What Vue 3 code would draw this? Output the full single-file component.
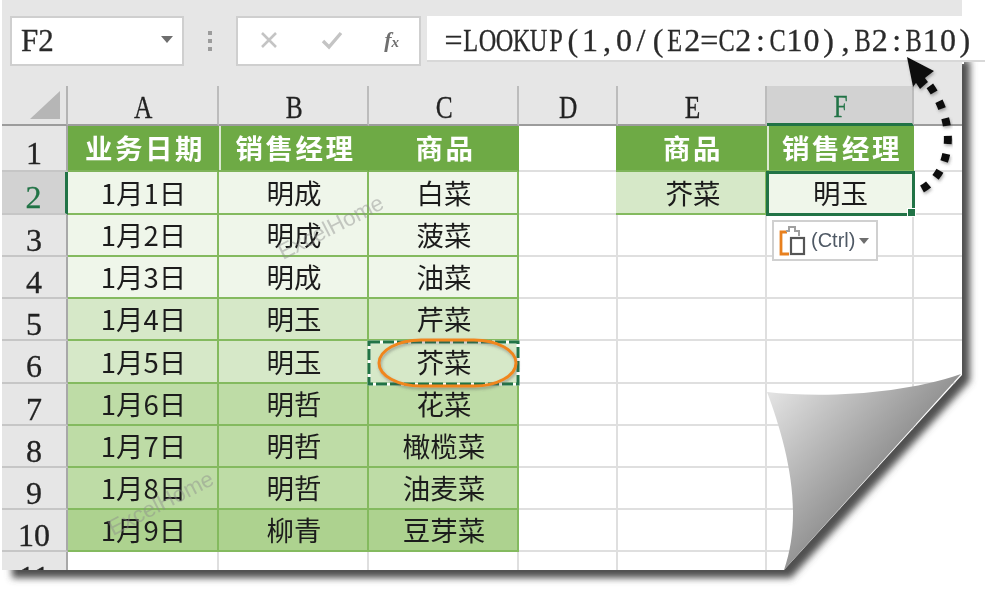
<script setup>
const colWidths = [66, 151, 150, 150, 99, 149, 147, 50]
const rowHeights = [46, 43, 42, 42, 42, 43, 42, 42, 42, 42, 42]
const columns = ['A', 'B', 'C', 'D', 'E', 'F', '']
const formula = '=LOOKUP(1,0/(E2=C2:C10),B2:B10)'.split('').map((ch) => ({ ch, wide: /[A-Z]/.test(ch) }))

const table = [
  ['业务日期', '销售经理', '商品'],
  ['1月1日', '明成', '白菜'],
  ['1月2日', '明成', '菠菜'],
  ['1月3日', '明成', '油菜'],
  ['1月4日', '明玉', '芹菜'],
  ['1月5日', '明玉', '芥菜'],
  ['1月6日', '明哲', '花菜'],
  ['1月7日', '明哲', '橄榄菜'],
  ['1月8日', '明哲', '油麦菜'],
  ['1月9日', '柳青', '豆芽菜'],
  ['', '', '']
]
const bands = ['head', 'b1', 'b1', 'b1', 'b2', 'b2', 'b3', 'b3', 'b3', 'b4', '']
const lookup = { 0: [['商品', 'head ext'], ['销售经理', 'head sepl']], 1: [['芥菜', 'b2 ext'], ['明玉', 'b1 selected']] }

const rows = table.map((cells, i) => {
  const list = cells.map((text, c) => ({ text, cls: bands[i] + (i === 0 && c === 1 ? ' sepl' : '') }))
  list.push({ text: '', cls: '' })
  const extra = lookup[i] || [['', ''], ['', '']]
  extra.forEach(([text, cls]) => list.push({ text, cls }))
  list.push({ text: '', cls: '' })
  return { num: i + 1, cells: list }
})

const gridStyle = {
  gridTemplateColumns: colWidths.map((w) => w + 'px').join(' '),
  gridTemplateRows: '40px ' + rowHeights.map((h) => h + 'px').join(' ')
}
</script>

<template>
  <div class="page">
    <svg class="back" width="985" height="594" viewBox="0 0 985 594">
      <defs>
        <filter id="soft" x="-5%" y="-5%" width="110%" height="110%"><feGaussianBlur stdDeviation="3.6" /></filter>
      </defs>
      <path d="M12 60 L970 60 L970 381 L791 578 L12 578 Z" fill="#4f4f4f" filter="url(#soft)" />
    </svg>

    <div class="sheet">
      <div class="toolbar">
        <div class="namebox">
          <span>F2</span>
          <i class="caret"></i>
        </div>
        <div class="dots"><i></i><i></i><i></i></div>
        <div class="fnbox">
          <svg width="22" height="22" viewBox="0 0 22 22"><path d="M4 4 L18 18 M18 4 L4 18" stroke="#c4c4c4" stroke-width="2.6" fill="none" /></svg>
          <svg width="24" height="22" viewBox="0 0 24 22"><path d="M3 12 L9 18 L21 4" stroke="#c4c4c4" stroke-width="3.4" fill="none" /></svg>
          <span class="fx">f<small>x</small></span>
        </div>
        <div class="formula"><span v-for="(c, i) in formula" :key="i" class="ch"><span :class="{ wide: c.wide }">{{ c.ch }}</span></span></div>
      </div>

      <div class="grid" :style="gridStyle">
        <div class="corner">
          <svg width="34" height="32" viewBox="0 0 34 32"><path d="M1 30 L31 2 L31 30 Z" fill="#b6b6b6" /></svg>
        </div>
        <div v-for="c in columns" :key="c" class="colhead" :class="{ on: c === 'F', last: !c }"><span>{{ c }}</span></div>

        <template v-for="row in rows" :key="row.num">
          <div class="rowhead" :class="{ on: row.num === 2 }">{{ row.num }}</div>
          <div v-for="(cell, i) in row.cells" :key="i" class="cell" :class="cell.cls">
            {{ cell.text }}
            <template v-if="cell.cls.includes('selected')">
              <i class="handle"></i>
              <div class="paste">
                <svg width="32" height="32" viewBox="0 0 32 32">
                  <path d="M9 7 H3 V29 H11" stroke="#e8801e" stroke-width="2.8" fill="none" />
                  <path d="M8 6 H11 V2 H17 V6 H21 V11" stroke="#a0a0a0" stroke-width="2" fill="none" />
                  <rect x="13" y="13" width="13" height="16" stroke="#555" stroke-width="2.2" fill="#fff" />
                </svg>
                <span>(Ctrl)</span>
                <i class="caret small"></i>
              </div>
            </template>
          </div>
        </template>
      </div>
    </div>

    <svg class="over" width="985" height="594" viewBox="0 0 985 594">
      <defs>
        <linearGradient id="curl" gradientUnits="userSpaceOnUse" x1="770" y1="395" x2="905" y2="515">
          <stop offset="0" stop-color="#e2e2e2" />
          <stop offset="1" stop-color="#757575" />
        </linearGradient>
        <filter id="glow" x="-10%" y="-10%" width="120%" height="130%"><feDropShadow dx="1" dy="2" stdDeviation="1.5" flood-color="#555" flood-opacity=".45" /></filter>
      </defs>

      <rect x="369" y="342" width="149" height="42" fill="none" stroke="#fff" stroke-width="3" />
      <rect x="369" y="342" width="149" height="42" fill="none" stroke="#217346" stroke-width="3" stroke-dasharray="11 3" />
      <rect x="379" y="340" width="137" height="46" rx="42" ry="23" fill="none" stroke="#f0861f" stroke-width="3" filter="url(#glow)" />

      <text class="mark" transform="translate(283 260) rotate(-27)">ExcelHome</text>
      <text class="mark" transform="translate(113 536) rotate(-27)">ExcelHome</text>

      <path d="M767 392 C820 398 900 395 961 374 L784 570 C805 510 785 440 767 392 Z" fill="url(#curl)" />

      <g filter="url(#glow)">
        <path d="M922 189 C948 175 962 128 927 82" fill="none" stroke="#111" stroke-width="8" stroke-dasharray="8 10" />
        <path d="M907 57 L934 71 L925 78 L928 82 L920 89 L916 83 L913 87 Z" fill="#111" />
      </g>
    </svg>
  </div>
</template>

<style scoped>
.page {
  position: relative;
  width: 985px;
  height: 594px;
  overflow: hidden;
  background: #fff;
  filter: blur(0.35px);
}
.back,
.over {
  position: absolute;
  left: 0;
  top: 0;
  pointer-events: none;
}
.over {
  z-index: 3;
}
.mark {
  font: 22.5px "Liberation Sans", sans-serif;
  fill: #8c8c8c;
  fill-opacity: 0.45;
}
.sheet {
  position: relative;
  z-index: 1;
  width: 962px;
  height: 570px;
  margin-left: 2px;
  background: #fff;
  clip-path: polygon(-2px 0, 983px 0, 983px 64px, 960px 64px, 960px 375px, 782px 570px, -2px 570px);
}
.toolbar {
  display: flex;
  align-items: flex-start;
  box-sizing: border-box;
  width: 960px;
  height: 86px;
  padding: 16px 0 0 8px;
  background: #e6e6e6;
}
.namebox {
  flex: none;
  display: flex;
  align-items: center;
  justify-content: space-between;
  box-sizing: border-box;
  width: 174px;
  height: 50px;
  padding: 0 9px 0 9px;
  background: #fff;
  border: 2px solid #cfcfcf;
  font: 31px "Liberation Serif", serif;
  color: #2a2a2a;
  -webkit-text-stroke: 0.3px #2a2a2a;
}
.caret {
  display: block;
  width: 0;
  height: 0;
  border-left: 6px solid transparent;
  border-right: 6px solid transparent;
  border-top: 7px solid #6e6e6e;
}
.namebox .caret {
  margin-bottom: 4px;
}
.caret.small {
  border-left-width: 5px;
  border-right-width: 5px;
  border-top-width: 6px;
}
.dots {
  flex: none;
  display: flex;
  flex-direction: column;
  gap: 4px;
  width: 52px;
  padding-top: 15px;
  align-items: center;
}
.dots i {
  width: 4px;
  height: 4px;
  background: #9c9c9c;
}
.fnbox {
  flex: none;
  display: flex;
  align-items: center;
  justify-content: space-between;
  box-sizing: border-box;
  width: 185px;
  height: 50px;
  padding: 0 20px 2px 20px;
  background: #fff;
  border: 2px solid #cfcfcf;
}
.fx {
  font: italic bold 22px "Liberation Serif", serif;
  color: #6f6f6f;
}
.fx small {
  font-size: 15px;
}
.formula {
  flex: none;
  display: flex;
  box-sizing: border-box;
  width: 558px;
  height: 46px;
  margin-left: 6px;
  padding: 6px 0 0 18px;
  background: #fff;
  border-bottom: 2px solid #d8d8d8;
  font: 32px/36px "Liberation Serif", serif;
  color: #2a2a2a;
  -webkit-text-stroke: 0.3px #2a2a2a;
  white-space: nowrap;
  overflow: hidden;
}
.ch {
  flex: none;
  display: flex;
  justify-content: center;
  width: 17.05px;
}
.wide {
  flex: none;
  display: block;
  transform: scaleX(0.76);
}
.grid {
  display: grid;
  font: 27.5px "Noto Sans CJK SC", sans-serif;
  color: #1c1c1c;
}
.corner {
  display: flex;
  justify-content: flex-end;
  align-items: center;
  padding-right: 3px;
  background: #e6e6e6;
  border-bottom: 2px solid #9c9c9c;
  border-right: 2px solid #b4b4b4;
}
.colhead {
  display: flex;
  align-items: center;
  justify-content: center;
  box-sizing: border-box;
  padding: 5px 0 0 2px;
  background: #e6e6e6;
  border-right: 2px solid #bcbcbc;
  border-bottom: 2px solid #9c9c9c;
  font: 31px "Liberation Serif", serif;
  color: #222;
  -webkit-text-stroke: 0.3px currentColor;
}
.colhead span {
  display: inline-block;
  transform: scaleX(0.82);
}
.colhead.on {
  background: #d2d2d2;
  color: #217346;
  border-bottom: 3px solid #217346;
}
.colhead.last {
  border-right: 0;
}
.rowhead {
  display: flex;
  align-items: center;
  justify-content: center;
  box-sizing: border-box;
  padding-top: 9px;
  background: #e6e6e6;
  border-right: 2px solid #a8a8a8;
  border-bottom: 2px solid #c6c6c6;
  font: 32px/32px "Liberation Serif", serif;
  color: #222;
  -webkit-text-stroke: 0.3px currentColor;
  overflow: hidden;
}
.rowhead.on {
  background: #d2d2d2;
  color: #217346;
  border-right: 3px solid #217346;
}
.cell {
  position: relative;
  display: flex;
  align-items: center;
  justify-content: center;
  box-sizing: border-box;
  padding: 0 0 2px 2px;
  border-right: 2px solid #dfdfdf;
  border-bottom: 2px solid #dfdfdf;
  white-space: nowrap;
}
.head {
  padding-left: 5px;
  background: #6eaa45;
  border-color: #6eaa45;
  color: #fff;
  font-weight: 700;
  letter-spacing: 2.5px;
  border-bottom-color: #7fb45a;
}
.sepl {
  box-shadow: inset 2px 0 0 #dbe8d0;
}
.ext {
  margin-left: -2px;
  padding-left: 5px;
}
.b1,
.b2,
.b3,
.b4 {
  border-color: #84ba5f;
}
.b1 {
  background: #eff6ea;
}
.b2 {
  background: #d6e8c8;
}
.b3 {
  background: #bedca6;
}
.b4 {
  background: #add28f;
}
.selected {
  z-index: 2;
  background: #eff6ea;
  outline: 3px solid #217346;
  outline-offset: -2px;
}
.handle {
  position: absolute;
  right: -4px;
  bottom: -4px;
  width: 7px;
  height: 7px;
  background: #217346;
  border: 1px solid #fff;
}
.paste {
  position: absolute;
  left: 5px;
  top: 48px;
  display: flex;
  align-items: center;
  gap: 1px;
  box-sizing: border-box;
  width: 106px;
  height: 41px;
  padding-left: 4px;
  background: #fff;
  border: 2px solid #d0d0d0;
  font: 20px "Liberation Sans", sans-serif;
  color: #4f5965;
}
.paste .caret {
  margin-left: 3px;
}
</style>

<style>
html,
body {
  margin: 0;
  background: #fff;
}
</style>
